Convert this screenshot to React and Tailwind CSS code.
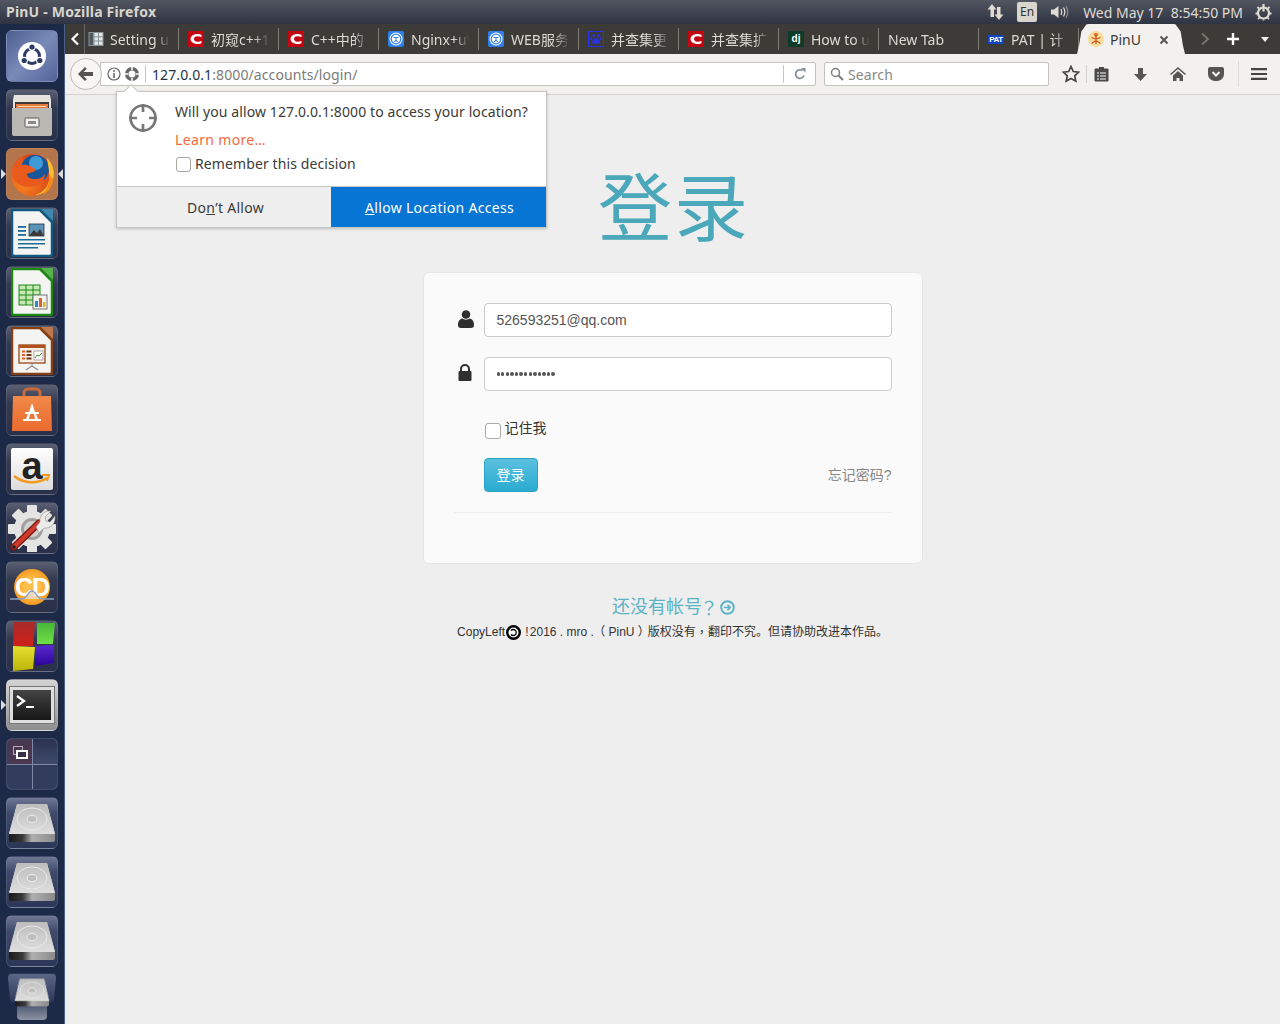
import React from "react";

const CJK = "font-['Noto_Sans','Noto_Sans_CJK_SC',sans-serif]";

function CFav() {
  return (
    <svg width="16" height="16" viewBox="0 0 16 16" className="shrink-0">
      <rect width="16" height="16" fill="#c40410" />
      <path d="M13.500 3.800C11.800 3 9.800 2.800 8 3.100 4.800 3.600 2.500 5.500 2.500 8s2.300 4.400 5.500 4.900c1.800.3 3.800.1 5.500-.7V9.800c-1.400.7-2.800 1-4.300.9C7.200 10.500 6 9.500 6 8s1.200-2.500 3.200-2.700c1.500-.1 2.900.2 4.300.9z" fill="#fff" />
    </svg>
  );
}
function NgFav() {
  return (
    <svg width="16" height="16" viewBox="0 0 16 16" className="shrink-0">
      <rect width="16" height="16" rx="2" fill="#2f80ee" />
      <circle cx="8" cy="8" r="6.500" fill="#fff" />
      <circle cx="8" cy="8" r="4.800" fill="none" stroke="#2f80ee" strokeWidth="1.300" />
      <path d="M5.500 6.500h5M8 6.500v4M6 11l2-2 2 2" stroke="#2f80ee" strokeWidth="1" fill="none" />
    </svg>
  );
}
function PawFav() {
  return (
    <svg width="16" height="16" viewBox="0 0 16 16" className="shrink-0">
      <rect x="0.500" y="0.500" width="15" height="15" fill="#3c3b37" stroke="#2932e1" />
      <g fill="#2932e1">
        <ellipse cx="5.800" cy="4.500" rx="1.300" ry="1.800" />
        <ellipse cx="10.200" cy="4.500" rx="1.300" ry="1.800" />
        <ellipse cx="3.300" cy="7.500" rx="1.200" ry="1.600" />
        <ellipse cx="12.700" cy="7.500" rx="1.200" ry="1.600" />
        <path d="M8 7c-2 0-4 3-4 4.500S5.500 13 8 12.600c2.500.4 4 .4 4-1.100S10 7 8 7z" />
      </g>
    </svg>
  );
}
function GridFav() {
  return (
    <svg width="16" height="16" viewBox="0 0 16 16" className="shrink-0">
      <rect x="0.500" y="1" width="15" height="14" fill="#8b9499" />
      <rect x="1.500" y="2" width="3.500" height="12" fill="#4d5a62" />
      <g fill="#e4e7e8">
        <rect x="6.500" y="2" width="3.500" height="3.200" />
        <rect x="11" y="2" width="3.500" height="3.200" />
        <rect x="6.500" y="6.300" width="3.500" height="3.200" />
        <rect x="11" y="6.300" width="3.500" height="3.200" />
        <rect x="6.500" y="10.600" width="3.500" height="3.200" />
        <rect x="11" y="10.600" width="3.500" height="3.200" />
      </g>
    </svg>
  );
}
function DjFav() {
  return (
    <span className="w-4 h-4 shrink-0 bg-[#0c3b2a] text-white text-[10px] leading-4 font-bold text-center font-['Liberation_Sans',sans-serif]">dj</span>
  );
}
function PatFav() {
  return (
    <span className="w-4 h-4 shrink-0 flex items-center justify-center">
      <span className="bg-[#1142c4] text-white text-[8px] leading-[9px] font-bold px-px tracking-[-0.5px] font-['Liberation_Sans',sans-serif]">PAT</span>
    </span>
  );
}
function PinuFav() {
  return (
    <svg width="16" height="16" viewBox="0 0 16 16" className="shrink-0">
      <circle cx="8" cy="8" r="8" fill="#f6dd9c" />
      <g stroke="#d65a2a" strokeWidth="1.300" fill="none">
        <circle cx="8" cy="3.800" r="1.200" fill="#d65a2a" />
        <path d="M8 5.500V13M3.500 6.500L8 8l4.500-1.500M3.500 12.500L8 9.500l4.500 3" />
      </g>
    </svg>
  );
}

function Tab({ icon, text, w = "w-[100px]", pl = "pl-[9px]", gap = "gap-[7px]" }) {
  return (
    <div className={`${w} ${pl} ${gap} h-[30px] shrink-0 flex items-center relative`}>
      {icon}
      <span className="flex-1 min-w-0 overflow-hidden whitespace-nowrap text-[14px] text-[#dcdad5] [mask-image:linear-gradient(to_right,black_72%,transparent_98%)]">
        {text}
      </span>
      <span className="w-px h-[22px] bg-[#7d7b74] shrink-0" />
    </div>
  );
}

/* ---------- launcher ---------- */
function Tile({ children, bg = "bg-[linear-gradient(180deg,#5a5f72_0%,#33394f_35%,#2a3049_100%)]", pipL, pipR, extra = "" }) {
  return (
    <div className={`relative w-[52px] h-[52px] shrink-0 rounded-[6px] flex items-center justify-center border border-white/10 ${bg} ${extra}`}>
      {children}
      {pipL && <span className="absolute left-[-6px] top-[20px] w-0 h-0 border-y-[5px] border-y-transparent border-l-[5px] border-l-[#dcdcdc]" />}
      {pipR && <span className="absolute right-[-6px] top-[20px] w-0 h-0 border-y-[5px] border-y-transparent border-r-[5px] border-r-[#dcdcdc]" />}
    </div>
  );
}

function Ubuntu() {
  return (
    <svg width="30" height="30" viewBox="0 0 30 30">
      <circle cx="15" cy="15" r="14" fill="#fff" />
      <circle cx="15" cy="15" r="7.500" fill="none" stroke="#2d3a63" strokeWidth="3" />
      <g fill="#fff">
        <circle cx="15" cy="6" r="3.700" />
        <circle cx="7.200" cy="19.500" r="3.700" />
        <circle cx="22.800" cy="19.500" r="3.700" />
      </g>
      <g fill="#2d3a63">
        <circle cx="15" cy="6" r="2.600" />
        <circle cx="7.200" cy="19.500" r="2.600" />
        <circle cx="22.800" cy="19.500" r="2.600" />
      </g>
    </svg>
  );
}
function Cabinet() {
  return (
    <svg width="44" height="44" viewBox="0 0 44 44">
      <path d="M4 2h36l1 5v8H3V7z" fill="#e6e4df" />
      <rect x="5" y="9" width="34" height="8" fill="#3a3a3a" />
      <rect x="6" y="11" width="32" height="5" fill="#e87c3e" />
      <rect x="8" y="13" width="28" height="1" fill="#fbd7a8" />
      <path d="M2 15h40v26a2 2 0 0 1-2 2H4a2 2 0 0 1-2-2z" fill="#b9b8b3" />
      <rect x="15" y="25" width="14" height="9" rx="1" fill="#eeeeea" stroke="#5a5a5a" />
      <rect x="18" y="28" width="8" height="3" fill="#8a8a86" />
    </svg>
  );
}
function Firefox() {
  return (
    <svg width="46" height="46" viewBox="0 0 46 46">
      <defs>
        <radialGradient id="ffo" cx="0.300" cy="0.700" r="0.800">
          <stop offset="0" stopColor="#f7861c" />
          <stop offset="1" stopColor="#d63c1c" />
        </radialGradient>
      </defs>
      <circle cx="23" cy="24" r="21" fill="url(#ffo)" />
      <circle cx="26" cy="18" r="14" fill="#17569b" />
      <circle cx="27" cy="12" r="7" fill="#3f9bd6" />
      <path d="M38 7c6 6 8 14 6 22-2 8-9 15-18 15 7-2 13-7 14-15 1-8-1-15-2-22z" fill="#fbc02d" />
      <path d="M33 44c7-3 11-9 11-16l-4-4c1 8-2 15-7 20z" fill="#f7861c" />
      <path d="M3 22c1-8 6-14 12-17-2 3-3 6-2 9 5-1 11 2 14 5-2 3-7 2-9 4 0 3 3 5 8 5 5 0 8-2 10-5 0 7-7 13-16 13C10 36 4 30 3 22z" fill="#ea5a1c" />
    </svg>
  );
}
function Doc({ edge, corner, children }) {
  return (
    <svg width="42" height="48" viewBox="0 0 42 48">
      <path d="M1 1h28l12 12v32a2 2 0 0 1-2 2H3a2 2 0 0 1-2-2z" fill="#f4f4f2" stroke={edge} strokeWidth="2.500" />
      <path d="M30 0l12 12V0z" fill={corner} />
      {children}
    </svg>
  );
}
function Writer() {
  return (
    <Doc edge="#0e5a85" corner="#3f87ae">
      <g fill="#1a6a9a">
        <rect x="7" y="17" width="8" height="1.800" />
        <rect x="7" y="21" width="8" height="1.800" />
        <rect x="7" y="25" width="8" height="1.800" />
        <rect x="7" y="30" width="27" height="1.500" />
        <rect x="7" y="34" width="27" height="1.500" />
        <rect x="7" y="38" width="20" height="1.500" />
      </g>
      <rect x="18" y="15" width="15" height="12" fill="#5c92b6" stroke="#234" strokeWidth=".8" />
      <path d="M18 27l5-6 3 3 3-4 4 7z" fill="#3a3a3a" />
    </Doc>
  );
}
function Calc() {
  return (
    <Doc edge="#1a8a12" corner="#55b648">
      <rect x="8" y="17" width="21" height="20" fill="#c7e8b5" stroke="#1a8a12" />
      <path d="M8 22h21M8 27h21M8 32h21M15 17v20M22 17v20" stroke="#1a8a12" />
      <rect x="22" y="27" width="14" height="14" fill="#f2f2ee" stroke="#777" />
      <rect x="24" y="33" width="3" height="6" fill="#2f86c9" />
      <rect x="28" y="30" width="3" height="9" fill="#d9622c" />
      <rect x="32" y="34" width="2.500" height="5" fill="#e8b32c" />
    </Doc>
  );
}
function Impress() {
  return (
    <Doc edge="#8a3f12" corner="#c0774a">
      <rect x="8" y="18" width="26" height="18" fill="#f8efe7" stroke="#9a4716" strokeWidth="1.300" />
      <rect x="8" y="18" width="26" height="3" fill="#b0521d" />
      <g fill="#d9622c">
        <rect x="11" y="23.500" width="3" height="2" />
        <rect x="11" y="27" width="3" height="2" />
        <rect x="11" y="30.500" width="3" height="2" />
      </g>
      <g fill="#6b3a1c">
        <rect x="15.500" y="23.500" width="5" height="2" />
        <rect x="15.500" y="27" width="5" height="2" />
        <rect x="15.500" y="30.500" width="5" height="2" />
      </g>
      <rect x="23" y="24" width="9" height="9" fill="#fff" stroke="#777" strokeWidth=".6" />
      <path d="M24 31l2-3 2 1 3-3" stroke="#3a9a3a" fill="none" />
      <path d="M21 36v3l-6 4M21 39l6 4" stroke="#8c8c8c" strokeWidth="1.200" fill="none" />
    </Doc>
  );
}
function Store() {
  return (
    <svg width="44" height="46" viewBox="0 0 44 46">
      <defs>
        <linearGradient id="stg" x1="0" y1="0" x2="0" y2="1">
          <stop offset="0" stopColor="#f08a4a" />
          <stop offset="1" stopColor="#ea6a2e" />
        </linearGradient>
      </defs>
      <path d="M14 13V6a4 4 0 0 1 4-4h8a4 4 0 0 1 4 4v7" fill="none" stroke="#c9683a" strokeWidth="3" />
      <path d="M3 9h38l1 35H2z" fill="url(#stg)" />
      <path d="M22 16l-3 9h-4v2h3l-2 5h-3v2h9v-2h-3l1-5h4l1 5h-3v2h9v-2h-3l-2-5h3v-2h-4z" fill="#fff" />
    </svg>
  );
}
function Amazon() {
  return (
    <div className="w-[42px] h-[42px] bg-[linear-gradient(180deg,#ffffff,#dcdcdc)] rounded-[2px] relative flex justify-center">
      <span className="text-[38px] leading-[36px] font-bold text-[#222] font-['Liberation_Sans',sans-serif]">a</span>
      <svg width="42" height="42" viewBox="0 0 42 42" className="absolute left-0 top-0">
        <path d="M3 28c10 8 24 8 33 2" stroke="#f29a1f" strokeWidth="2.500" fill="none" />
        <path d="M31 27l7 0-2 6" stroke="#f29a1f" strokeWidth="2" fill="none" />
      </svg>
    </div>
  );
}
function Settings() {
  return (
    <svg width="48" height="48" viewBox="0 0 48 48">
      <g fill="#e4e4e2">
        <circle cx="24" cy="25" r="18" />
        <rect x="19" y="1" width="10" height="48" rx="1" />
        <rect x="19" y="1" width="10" height="48" rx="1" transform="rotate(45 24 25)" />
        <rect x="19" y="1" width="10" height="48" rx="1" transform="rotate(90 24 25)" />
        <rect x="19" y="1" width="10" height="48" rx="1" transform="rotate(135 24 25)" />
      </g>
      <circle cx="24" cy="25" r="11" fill="#a0a0a0" />
      <circle cx="24" cy="25" r="8" fill="#d0d0ce" />
      <path d="M6 43L31 19" stroke="#7c1610" strokeWidth="7" strokeLinecap="round" />
      <path d="M6 43L31 19" stroke="#cf3a2c" strokeWidth="4.500" strokeLinecap="round" />
      <circle cx="6" cy="43" r="1.800" fill="#222" />
      <path d="M28 23l4-5c-1-6 4-12 11-11l-6 6 1 4 4 1 5-6c1 8-5 13-11 12l-5 5z" fill="#ececea" stroke="#8a8a8a" strokeWidth=".6" />
    </svg>
  );
}
function CdIcon() {
  return (
    <div className="w-[36px] h-[36px] rounded-full bg-[radial-gradient(circle,#ffc04a_30%,#f08a10_90%)] flex items-center justify-center relative">
      <span className="text-white font-bold text-[25px] leading-none tracking-[-1px] font-['Liberation_Sans',sans-serif]">CD</span>
      <svg width="44" height="12" viewBox="0 0 44 12" className="absolute left-[-4px] top-[20px]">
        <path d="M0 10h12c5 0 6-8 10-8s5 8 10 8h12" stroke="#8ba0c6" strokeWidth="1.500" fill="#e6e2e2" fillOpacity=".7" />
      </svg>
    </div>
  );
}
function Cubes() {
  return (
    <svg width="46" height="50" viewBox="0 0 46 50">
      <defs>
        <linearGradient id="cr" x1="0" y1="0" x2="0" y2="1"><stop offset="0" stopColor="#a82a28" /><stop offset="1" stopColor="#d0201c" /></linearGradient>
        <linearGradient id="cg" x1="0" y1="0" x2="0" y2="1"><stop offset="0" stopColor="#48b838" /><stop offset="1" stopColor="#70de48" /></linearGradient>
        <linearGradient id="cy" x1="0" y1="0" x2="0" y2="1"><stop offset="0" stopColor="#e8e030" /><stop offset="1" stopColor="#bcb408" /></linearGradient>
        <linearGradient id="cb" x1="0" y1="0" x2="0" y2="1"><stop offset="0" stopColor="#5a2ad0" /><stop offset="1" stopColor="#2c0498" /></linearGradient>
      </defs>
      <path d="M5 1h21l-2 24H4z" fill="url(#cr)" />
      <path d="M28 2h18l-2 21H28z" fill="url(#cg)" />
      <path d="M4 25l22 1-2 22-20 2z" fill="url(#cy)" />
      <path d="M26 25l19-1v18l-19 3z" fill="url(#cb)" />
    </svg>
  );
}
function TerminalI() {
  return (
    <div className="w-[44px] h-[36px] bg-[linear-gradient(180deg,#444,#161616)] border-[3px] border-[#dedede] flex items-start outline outline-1 outline-[#777]">
      <svg width="38" height="30" viewBox="0 0 38 30">
        <path d="M4 6l7 5-7 5" stroke="#fff" strokeWidth="2.200" fill="none" />
        <path d="M13 17h8" stroke="#fff" strokeWidth="2" fill="none" />
      </svg>
    </div>
  );
}
function Switcher() {
  return (
    <div className="w-full h-full grid grid-cols-2 grid-rows-2 gap-px bg-[#7f89a3] rounded-[5px] overflow-hidden">
      <div className="bg-[#4a3850] flex items-start pl-[6px] pt-[7px]">
        <div className="relative w-[16px] h-[14px]">
          <div className="w-[10px] h-[9px] border border-[#b5aeb8]" />
          <div className="absolute left-[3px] top-[4px] w-[12px] h-[9px] border-2 border-white bg-[#3a3048]" />
        </div>
      </div>
      <div className="bg-[linear-gradient(180deg,#2a3350,#3f4a6b)]" />
      <div className="bg-[#323c5c]" />
      <div className="bg-[#323c5c]" />
    </div>
  );
}
function Drive({ size = 46 }) {
  return (
    <svg width={size} height={size * 0.87} viewBox="0 0 46 40">
      <path d="M8 1h30l8 30v6H0v-6z" fill="#c8c8c8" />
      <path d="M8 1h30l8 30H0z" fill="url(#dg)" />
      <ellipse cx="23" cy="16" rx="15" ry="11" fill="none" stroke="#e8e8e8" strokeWidth="1" />
      <ellipse cx="23" cy="16" rx="5" ry="3.500" fill="#bdbdbd" stroke="#efefef" />
      <path d="M0 31h46v6a2 2 0 0 1-2 2H2a2 2 0 0 1-2-2z" fill="url(#dh)" />
      <defs>
        <linearGradient id="dg" x1="0" y1="0" x2="0" y2="1">
          <stop offset="0" stopColor="#bdbdbd" />
          <stop offset="1" stopColor="#dedede" />
        </linearGradient>
        <linearGradient id="dh" x1="0" y1="0" x2="1" y2="0">
          <stop offset="0" stopColor="#1a1a1a" />
          <stop offset="0.300" stopColor="#3a3a3a" />
          <stop offset="0.500" stopColor="#b0b0b0" />
          <stop offset="1" stopColor="#8a8a8a" />
        </linearGradient>
      </defs>
    </svg>
  );
}

const driveBg = "bg-[linear-gradient(180deg,#6e7894_0%,#3f4a6b_30%,#2c3658_100%)]";

function Launcher() {
  return (
    <div className="w-[65px] shrink-0 h-[1000px] overflow-hidden bg-[#1c2947] border-r border-r-[#4c6087] flex flex-col items-start pl-[6px] pt-[6px] gap-[7px]">
      <Tile bg="bg-[linear-gradient(135deg,#4c5d90,#7a8ab8_50%,#53639a)]"><Ubuntu /></Tile>
      <Tile><Cabinet /></Tile>
      <Tile bg="bg-[#b5754c]" pipL pipR><Firefox /></Tile>
      <Tile><Writer /></Tile>
      <Tile><Calc /></Tile>
      <Tile><Impress /></Tile>
      <Tile><Store /></Tile>
      <Tile><Amazon /></Tile>
      <Tile><Settings /></Tile>
      <Tile><CdIcon /></Tile>
      <Tile><Cubes /></Tile>
      <Tile bg="bg-[linear-gradient(180deg,#d4d4d4,#8e8e8e)]" pipL><TerminalI /></Tile>
      <Tile bg="bg-[#2d3757]"><Switcher /></Tile>
      <Tile bg={driveBg}><Drive /></Tile>
      <Tile bg={driveBg}><Drive /></Tile>
      <Tile bg={driveBg}><Drive /></Tile>
      <div className="relative w-[52px] h-[46px] shrink-0 flex flex-col items-center">
        <div className="w-[46px] h-[30px] rounded-[4px] bg-[linear-gradient(180deg,#5b6685,#2c3658)] flex justify-center pt-1 [transform:perspective(80px)_rotateX(-18deg)]">
          <Drive size={36} />
        </div>
        <div className="w-[30px] h-[16px] bg-[linear-gradient(180deg,#47526f,#8d93a2)] rounded-b-[4px]" />
      </div>
    </div>
  );
}

/* ---------- top panel ---------- */
function TopPanel() {
  return (
    <div className="h-[24px] shrink-0 bg-[linear-gradient(180deg,#525660,#2f3443)] flex items-center pl-[6px] pr-[8px] font-['Open_Sans',sans-serif]">
      <span className="font-['Noto_Sans',sans-serif] font-bold text-[14px] text-[#d8d5cc] tracking-[0.2px] mt-[-2px]">PinU - Mozilla Firefox</span>
      <div className="ml-auto flex items-center text-[#dfdbd2]">
        <svg width="17" height="18" viewBox="0 0 17 18" className="mr-[13px]">
          <path d="M5 1l4.500 5.500H7V14H3.500V6.500H.5zM12 17l-4.500-5.500H10V4h3.500v7.500H16.500z" fill="#dfdbd2" />
        </svg>
        <span className="w-5 h-5 rounded-[2px] bg-[#d8d5cc] text-[#333] text-[12px] leading-5 text-center mr-[13px] font-['Noto_Sans',sans-serif]">En</span>
        <svg width="20" height="16" viewBox="0 0 20 16" className="mr-[13px]">
          <path d="M1 5.500h3L8.500 2v12L4 10.500H1z" fill="#dfdbd2" />
          <path d="M11 5c1 2 1 4 0 6M13.500 3.500c1.700 3 1.700 6 0 9" stroke="#dfdbd2" fill="none" strokeWidth="1.300" />
          <path d="M16 2c2.300 4 2.300 8 0 12" stroke="#888" fill="none" strokeWidth="1.300" />
        </svg>
        <span className="text-[14px] whitespace-nowrap font-['Noto_Sans',sans-serif] text-[#dfdbd2] mr-[12px]">Wed May 17&nbsp; 8:54:50 PM</span>
        <svg width="17" height="18" viewBox="0 0 17 18">
          <path d="M8.500 4.500a5.500 5.500 0 1 1-.01 0z" fill="none" stroke="#dfdbd2" strokeWidth="2.200" />
          <path d="M8.500 1v7.500" stroke="#dfdbd2" strokeWidth="2.200" />
          <path d="M2.500 4l1.500 1.500M14.500 4L13 5.500M.5 10.500h1.500M15 10.500h1.500M3 16l1.200-1.200M14 16l-1.200-1.200M8.500 16.500v1" stroke="#dfdbd2" strokeWidth="1.800" />
        </svg>
      </div>
    </div>
  );
}

/* ---------- tab bar ---------- */
function TabBar() {
  return (
    <div className={`h-[30px] shrink-0 bg-[#3c3b37] flex items-center ${CJK}`}>
      <div className="w-[20px] h-[30px] border-r border-r-[#666] flex items-center justify-center shrink-0">
        <svg width="10" height="14" viewBox="0 0 10 14"><path d="M8 1.500L2.500 7 8 12.500" stroke="#fff" strokeWidth="2.200" fill="none" /></svg>
      </div>
      <Tab w="w-[94px]" pl="pl-[3px]" gap="gap-[6px]" icon={<GridFav />} text="Setting u" />
      <Tab icon={<CFav />} text="初窥c++1" />
      <Tab icon={<CFav />} text="C++中的" />
      <Tab icon={<NgFav />} text="Nginx+u\" />
      <Tab icon={<NgFav />} text="WEB服务" />
      <Tab icon={<PawFav />} text="并查集更" />
      <Tab icon={<CFav />} text="并查集扩" />
      <Tab icon={<DjFav />} text="How to u" />
      <Tab icon={null} text="New Tab" />
      <Tab icon={<PatFav />} text="PAT | 计" />
      <div className="relative w-[108px] h-[30px] shrink-0 ml-[-2px] bg-[#f2f1ef] rounded-t-[12px] flex items-center pl-[11px] gap-[6px] [clip-path:polygon(0_100%,2%_70%,4%_25%,9%_0,91%_0,96%_25%,98%_70%,100%_100%)]">
        <PinuFav />
        <span className="text-[14px] text-[#3c3b37]">PinU</span>
        <svg width="10" height="10" viewBox="0 0 10 10" className="absolute left-[82px] top-[11px]">
          <path d="M1.500 1.500l7 7M8.500 1.500l-7 7" stroke="#555" strokeWidth="2" />
        </svg>
      </div>
      <div className="flex-1 flex items-center pl-[15px]">
        <svg width="10" height="14" viewBox="0 0 10 14"><path d="M2 1.500L8 7 2 12.500" stroke="#77756f" strokeWidth="1.800" fill="none" /></svg>
        <svg width="14" height="14" viewBox="0 0 14 14" className="ml-[16px]"><path d="M7 1v12M1 7h12" stroke="#fff" strokeWidth="2.400" /></svg>
        <svg width="8" height="5" viewBox="0 0 8 5" className="ml-[21px]"><path d="M0 0h8L4 5z" fill="#f2f1ef" /></svg>
      </div>
    </div>
  );
}

/* ---------- nav toolbar ---------- */
function Toolbar() {
  return (
    <div className={`relative h-[41px] shrink-0 bg-[#f2f1ef] border-b border-b-[#d3d1cd] flex items-center pl-[5px] ${CJK}`}>
      <div className="relative z-10 w-[32px] h-[32px] rounded-full bg-[#f7f6f4] border border-[#bebcb8] flex items-center justify-center shrink-0 mt-[-1px]">
        <svg width="16" height="14" viewBox="0 0 16 14"><path d="M7 0l1.800 1.800L5.500 5H15v4H5.500l3.300 3.200L7 14 0 7z" fill="#555" /></svg>
      </div>
      <div className="ml-[-2px] w-[716px] h-[24px] bg-white border border-[#c5c3bf] rounded-r-[2px] flex items-center mt-[-1px] shrink-0">
        <svg width="14" height="14" viewBox="0 0 14 14" className="ml-[6px]">
          <circle cx="7" cy="7" r="6" fill="none" stroke="#666" strokeWidth="1.200" />
          <rect x="6.200" y="3" width="1.600" height="1.800" fill="#666" />
          <rect x="6.200" y="6" width="1.600" height="5" fill="#666" />
        </svg>
        <svg width="14" height="14" viewBox="0 0 14 14" className="ml-[4px]">
          <circle cx="7" cy="7" r="7" fill="#666" />
          <circle cx="7" cy="7" r="3.500" fill="#fff" />
          <path d="M7 0v3M7 11v3M0 7h3M11 7h3" stroke="#fff" strokeWidth="1.500" />
        </svg>
        <span className="w-px h-[18px] bg-[#c8c6c2] ml-[6px]" />
        <span className="ml-[6px] mt-[1px] text-[14px] text-[#7b7b78] tracking-[0.1px] whitespace-nowrap"><span className="text-[#1d3447]">127.0.0.1</span>:8000/accounts/login/</span>
        <span className="ml-auto w-px h-[18px] bg-[#c8c6c2]" />
        <svg width="12" height="12" viewBox="0 0 12 12" className="ml-[10px] mr-[9px]">
          <path d="M10 7.500A4.300 4.300 0 1 1 8.600 2.700" stroke="#7e8c94" strokeWidth="1.700" fill="none" />
          <path d="M7 0l4.500 0v4.500z" fill="#7e8c94" />
        </svg>
      </div>
      <div className="ml-[8px] w-[225px] h-[24px] bg-white border border-[#c5c3bf] rounded-[2px] flex items-center mt-[-1px] shrink-0">
        <svg width="14" height="14" viewBox="0 0 14 14" className="ml-[5px]">
          <circle cx="5.500" cy="5.500" r="4" fill="none" stroke="#7d7d7d" strokeWidth="1.500" />
          <path d="M8.500 8.500L13 13" stroke="#7d7d7d" strokeWidth="2" />
        </svg>
        <span className="ml-[4px] mt-[1px] text-[14px] text-[#8a8a87] tracking-[0.1px]">Search</span>
      </div>
      <svg width="18" height="18" viewBox="0 0 18 18" className="ml-[13px] shrink-0">
        <path d="M9 1.500l2.300 5 5.400.6-4 3.700 1.100 5.400L9 13.500l-4.800 2.700 1.100-5.400-4-3.700 5.400-.6z" fill="none" stroke="#444" strokeWidth="1.700" />
      </svg>
      <span className="ml-[6px] w-px h-[18px] bg-[#d3d1cd] shrink-0" />
      <svg width="15" height="16" viewBox="0 0 15 16" className="ml-[7px] shrink-0">
        <path d="M1 3h13v12H1z" fill="#4a4a4a" stroke="#4a4a4a" strokeLinejoin="round" />
        <rect x="5" y="1" width="5" height="3" fill="#4a4a4a" />
        <path d="M3 7h2M6 7h6M3 10h2M6 10h6M3 13h2M6 13h6" stroke="#fff" />
      </svg>
      <svg width="15" height="15" viewBox="0 0 15 15" className="ml-[24px] shrink-0">
        <path d="M5 1h5v6h4l-6.500 7L1 7h4z" fill="#555" />
      </svg>
      <svg width="16" height="14" viewBox="0 0 16 14" className="ml-[22px] shrink-0">
        <path d="M8 0L0 7l1 1 7-6 7 6 1-1zM3 8.500L8 4l5 4.500V14H9.500v-3h-3v3H3z" fill="#555" />
      </svg>
      <svg width="16" height="14" viewBox="0 0 16 14" className="ml-[22px] shrink-0">
        <path d="M0 2a2 2 0 0 1 2-2h12a2 2 0 0 1 2 2v5a7 7 0 0 1-7 7H7a7 7 0 0 1-7-7z" fill="#555" />
        <path d="M4.500 5l3.500 3.500L11.500 5" stroke="#f2f1ef" strokeWidth="2" fill="none" />
      </svg>
      <span className="ml-[14px] w-px h-[26px] bg-[#dedcd8] shrink-0" />
      <svg width="16" height="12" viewBox="0 0 16 12" className="ml-[12px] shrink-0">
        <path d="M0 1.200h16M0 6h16M0 10.800h16" stroke="#444" strokeWidth="2.200" />
      </svg>
    </div>
  );
}

/* ---------- popup ---------- */
function Popup() {
  return (
    <div className="absolute left-[51px] top-[67px] z-20 w-[431px] h-[137px] bg-white border border-[#c7c6c2] shadow-[0_1px_3px_rgba(0,0,0,0.2)] font-['Noto_Sans',sans-serif]">
      <span className="absolute left-[9px] top-[-6px] w-[10px] h-[10px] rotate-45 bg-white border-l border-t border-[#c7c6c2]" />
      <div className="h-[94px] pl-[58px] pt-[9px] relative">
        <svg width="30" height="30" viewBox="0 0 30 30" className="absolute left-[11px] top-[11px]">
          <circle cx="15" cy="15" r="12.500" fill="none" stroke="#777" strokeWidth="2.700" />
          <path d="M15 1v8M15 21v8M1 15h8M21 15h8" stroke="#777" strokeWidth="2.700" />
        </svg>
        <div className="text-[14px] leading-[22px] text-[#3c3b37] whitespace-nowrap tracking-[0.1px]">Will you allow 127.0.0.1:8000 to access your location?</div>
        <div className="text-[14px] leading-[20px] mt-[7px] text-[#f26b3a] tracking-[0.35px]">Learn more…</div>
        <div className="flex items-center mt-[4px] text-[14px] leading-[20px] text-[#3c3b37] tracking-[0.1px]">
          <span className="ml-[1px] w-[15px] h-[15px] bg-white border border-[#a8a6a2] rounded-[3px] mr-[4px]" />
          Remember this decision
        </div>
      </div>
      <div className="flex h-[41px] border-t border-t-[#c7c6c2] text-[14px] tracking-[0.3px]">
        <div className="w-[214px] bg-[#eeeeee] text-[#3c3b37] flex items-center justify-center pl-[3px]">Do<u>n</u>’t Allow</div>
        <div className="flex-1 bg-[#0675d3] text-white flex items-center justify-center pl-[2px]"><u>A</u>llow Location Access</div>
      </div>
    </div>
  );
}

/* ---------- page ---------- */
function Page() {
  return (
    <div className="flex-1 min-h-0 bg-[#eeeeee] flex flex-col items-center font-['Liberation_Sans','Noto_Sans_CJK_SC',sans-serif]">
      <h1 className="mt-[66px] ml-[3px] text-[74px] leading-[84px] font-normal text-[#4ba7ba] font-['Noto_Sans_CJK_SC',sans-serif] tracking-[2px]">登录</h1>
      <div className="mt-[27px] w-[500px] h-[292px] bg-[#fafafa] border border-[#e6e6e6] rounded-[6px] pt-[30px] pl-[29px] pr-[30px]">
        <div className="flex items-center h-[34px]">
          <svg width="16" height="18" viewBox="0 0 16 18" className="ml-[5px] mb-[2px] shrink-0">
            <circle cx="8" cy="4.500" r="4.300" fill="#2f2f2f" />
            <path d="M0 15c0-4 2-6 4-6.500 2.500 1.500 5.500 1.500 8 0 2 .5 4 2.500 4 6.500 0 2-1 3-3 3H3c-2 0-3-1-3-3z" fill="#2f2f2f" />
          </svg>
          <div className="ml-[10px] w-[408px] h-[34px] bg-white border border-[#cccccc] rounded-[4px] px-[12px] flex items-center text-[14px] text-[#555555]">526593251@qq.com</div>
        </div>
        <div className="flex items-center h-[34px] mt-[20px]">
          <svg width="14" height="17" viewBox="0 0 14 17" className="ml-[5px] mb-[4px] shrink-0">
            <path d="M3 8V5a4 4 0 0 1 8 0v3" fill="none" stroke="#2f2f2f" strokeWidth="2" />
            <rect x="0.500" y="7" width="13" height="10" rx="1" fill="#2f2f2f" />
          </svg>
          <div className="ml-[12px] w-[408px] h-[34px] bg-white border border-[#cccccc] rounded-[4px] px-[12px] flex items-center text-[#555555]">
            <span className="flex gap-[1.200px]">
              {Array.from({ length: 13 }, (_, i) => (
                <span key={i} className="w-[3.400px] h-[3.400px] rounded-full bg-[#555555]" />
              ))}
            </span>
          </div>
        </div>
        <div className="flex ml-[31px] mt-[27px] h-[27px] items-start">
          <span className="mt-[5px] ml-[1px] w-[16px] h-[16px] bg-white border border-[#aaaaaa] rounded-[3px] shrink-0" />
          <span className="ml-[4px] text-[14px] leading-[20px] text-[#333333]">记住我</span>
        </div>
        <div className="flex items-center justify-between ml-[31px] mt-[13px] h-[34px] mb-[20px]">
          <div className="w-[54px] h-[34px] rounded-[4px] bg-[linear-gradient(180deg,#5bc0de,#2aabd2)] border border-[#28a4c9] text-white text-[14px] flex items-center justify-center">登录</div>
          <span className="text-[14px] text-[#888888]">忘记密码?</span>
        </div>
        <div className="h-px bg-[#eeeeee] ml-[1px]" />
      </div>
      <div className="mt-[32px] ml-[2px] flex items-center text-[18px] leading-[22px] text-[#5cb3c4]">
        <span className="mr-[-2px]">还没有帐号</span>
        <span className="font-['Noto_Sans_CJK_TC',sans-serif]">？</span>
        <svg width="15" height="15" viewBox="0 0 15 15" className="ml-[2px]">
          <circle cx="7.500" cy="7.500" r="6.300" fill="none" stroke="#5cb3c4" strokeWidth="2" />
          <path d="M4 7.500h6M7.500 4.800l2.700 2.700-2.700 2.700" stroke="#5cb3c4" strokeWidth="1.700" fill="none" />
        </svg>
      </div>
      <div className="mt-[5px] flex items-center text-[12px] leading-[18px] text-[#333333] whitespace-pre">
        <span>CopyLeft</span>
        <span className="w-[15px] h-[15px] ml-[1px] rounded-full bg-black flex items-center justify-center shrink-0 mr-[4px]">
          <svg width="13" height="13" viewBox="0 0 13 13">
            <circle cx="6.500" cy="6.500" r="5" fill="#fff" />
            <path d="M4 4.500a3 3 0 1 1 0 4" stroke="#000" strokeWidth="1.300" fill="none" />
          </svg>
        </span>
        <span className="mr-[1.300px]">!</span>
        <span>2016 . mro . </span>
        <span className="ml-[-4px]">（ PinU ）</span>
        <span className="ml-[-2px]">版权没有</span>
        <span className="font-['Noto_Sans_CJK_TC',sans-serif]">，</span>
        <span>翻印不究。但请协助改进本作品。</span>
      </div>
    </div>
  );
}

export default function App() {
  return (
    <div className="w-[1280px] h-[1024px] overflow-hidden flex flex-col bg-[#eeeeee]">
      <TopPanel />
      <div className="flex flex-1 min-h-0">
        <Launcher />
        <div className="flex-1 min-w-0 flex flex-col relative">
          <TabBar />
          <Toolbar />
          <Popup />
          <Page />
        </div>
      </div>
    </div>
  );
}
